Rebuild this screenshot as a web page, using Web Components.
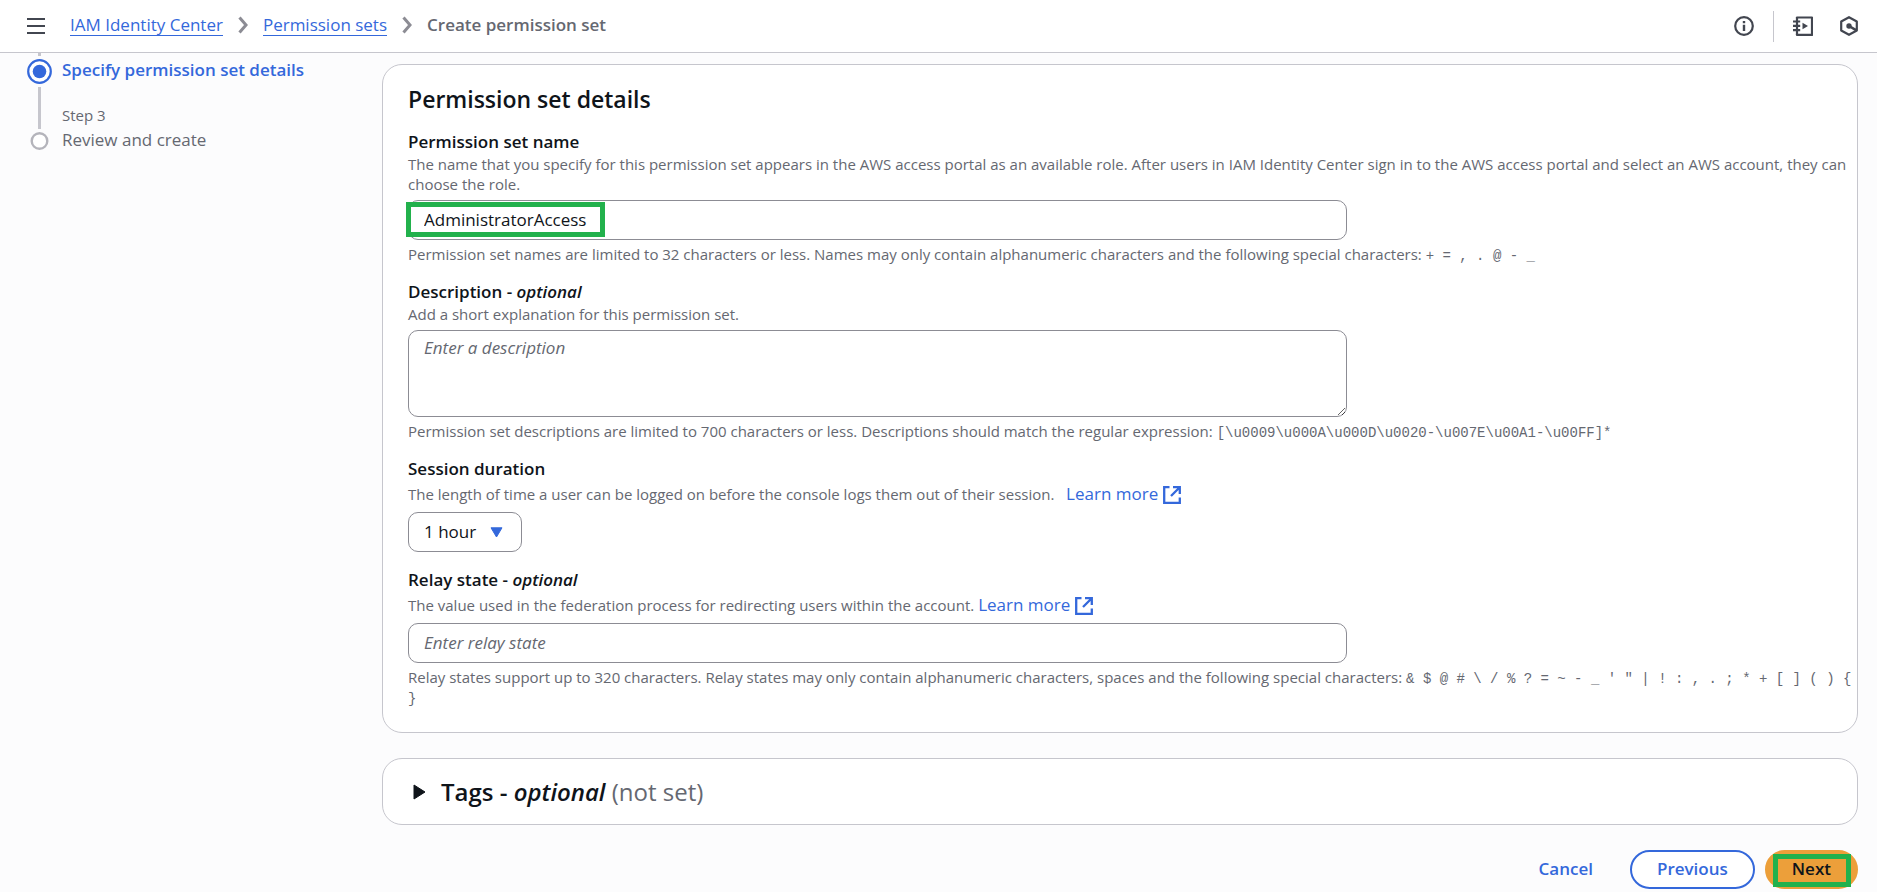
<!DOCTYPE html>
<html lang="en">
<head>
<meta charset="utf-8">
<meta name="viewport" content="width=device-width, initial-scale=1">
<title>Create permission set</title>
<style>
  body {
    margin: 0;
    background: #fcfcfd;
    color: #0f141a;
    font: 17px/25px "Open Sans", "Noto Sans", sans-serif;
    --blue: #3468db;
    --muted: #656871;
    --line: #c6c6cd;
    --field: #8c8c94;
    --mark: #22b14c;
  }
</style>
</head>
<body>
<iam-page></iam-page>

<script>
const define = (name, html, setup) => {
  const template = document.createElement('template');
  template.innerHTML = '<style>*{box-sizing:border-box}:host{display:block}</style>' + html;
  customElements.define(name, class extends HTMLElement {
    constructor() {
      super();
      this.attachShadow({ mode: 'open' }).append(template.content.cloneNode(true));
    }
    connectedCallback() { if (setup) setup(this, this.shadowRoot); }
  });
};

define('iam-header', `
  <style>
    :host { position: sticky; top: 0; z-index: 2; background: #fff; border-bottom: 1px solid var(--line); }
    header { display: flex; align-items: center; height: 52px; padding: 0 19px 0 27px; }
    button { display: flex; padding: 0; border: 0; background: none; color: #424650; cursor: pointer; }
    svg { display: block; }
    nav { flex: 1; margin-left: 25px; padding-bottom: 2px; }
    ol { display: flex; align-items: center; gap: 15px; margin: 0; padding: 0; list-style: none; }
    li { display: flex; align-items: center; gap: 15px; line-height: 21px; }
    a { display: block; color: var(--blue); text-decoration: none; border-bottom: 1px solid var(--blue); }
    .current { font-weight: 600; color: var(--muted); padding-bottom: 1px; }
    .tools { display: flex; align-items: center; }
    .rule { width: 1px; height: 31px; margin: 0 19px; background: var(--line); }
    .last { margin-left: 27px; }
  </style>
  <header>
    <button aria-label="Open navigation"><svg width="18" height="18" viewBox="0 0 18 18" stroke="currentColor" stroke-width="2"><path d="M0 2h18M0 9h18M0 16h18"/></svg></button>
    <nav aria-label="Breadcrumbs"><ol>
      <li><a href="#center">IAM Identity Center</a><svg width="10" height="18" viewBox="0 0 10 18" fill="none" stroke="#8c8c94" stroke-width="3"><path d="M1.500 1.500 8 9l-6.500 7.500"/></svg></li>
      <li><a href="#sets">Permission sets</a><svg width="10" height="18" viewBox="0 0 10 18" fill="none" stroke="#8c8c94" stroke-width="3"><path d="M1.500 1.500 8 9l-6.500 7.500"/></svg></li>
      <li class="current" aria-current="page">Create permission set</li>
    </ol></nav>
    <div class="tools">
      <button aria-label="Info"><svg width="20" height="20" viewBox="0 0 20 20" fill="none" stroke="currentColor" stroke-width="2.200"><circle cx="10" cy="10" r="8.800"/><path d="M10 5v2.200M10 8.700v6.300" stroke-width="2.400"/></svg></button>
      <span class="rule"></span>
      <button aria-label="Tutorials"><svg width="20" height="20" viewBox="0 0 20 20" fill="none" stroke="currentColor" stroke-width="2.200"><path d="M4 2.200V1.500h15v17.400H4v-1" stroke-linejoin="round"/><path d="M4 1v18M0 5.500h7.200M0 9.800h7.200M0 14.200h7.200"/><path d="M9.500 6.800v6.400l5.500-3.200z" fill="currentColor" stroke="none"/></svg></button>
      <button class="last" aria-label="Diagnostics"><svg width="18" height="20" viewBox="0 0 18 20" fill="none" stroke="currentColor" stroke-width="2.200"><path d="M9 1.200 1.200 5.500v9L9 18.800l7.800-4.300v-9z" stroke-linejoin="round"/><circle cx="9" cy="10" r="2.700" fill="currentColor" stroke="none"/><path d="m9 10 7.500 4.400" stroke-width="2.600"/></svg></button>
    </div>
  </header>`);

define('iam-steps', `
  <style>
    ol { margin: 0; padding: 0 0 0 27px; list-style: none; }
    li { display: grid; grid-template-columns: 25px 1fr; column-gap: 10px; }
    .rail { display: flex; flex-direction: column; align-items: center; gap: 3px; }
    .rail i { width: 3px; background: var(--line); }
    .rail .stub { height: 3px; }
    .rail .grow { flex: 1; }
    .rail.end { padding-bottom: 2px; }
    .active { padding-top: 4px; height: 52px; font-weight: 600; }
    a { color: var(--blue); text-decoration: none; }
    .next { color: var(--muted); }
    .next small { display: block; font-size: 15px; line-height: 20px; margin-bottom: 2px; }
    svg { display: block; }
  </style>
  <nav aria-label="Steps"><ol>
    <li>
      <div class="rail"><i class="stub"></i>
        <svg width="25" height="25" viewBox="0 0 25 25"><circle cx="12.500" cy="12.500" r="11.300" fill="#fff" stroke="#3468db" stroke-width="2.200"/><circle cx="12.500" cy="12.500" r="6.800" fill="#3468db"/></svg>
        <i class="grow"></i></div>
      <div class="active"><a href="#details" aria-current="step">Specify permission set details</a></div>
    </li>
    <li>
      <div class="rail end"><i class="grow"></i>
        <svg width="19" height="18" viewBox="0 0 19 18"><circle cx="9.500" cy="9" r="7.800" fill="#fff" stroke="#b4b4bb" stroke-width="2.400"/></svg></div>
      <div class="next"><small>Step 3</small>Review and create</div>
    </li>
  </ol></nav>`);

define('iam-card', `
  <style>
    :host { background: #fff; border: 1px solid var(--line); border-radius: 20px; box-sizing: border-box; }
  </style>
  <slot></slot>`);

define('iam-link', `
  <style>
    :host { display: inline; }
    a { font-size: 17px; line-height: 25px; color: var(--blue); text-decoration: none; white-space: nowrap; }
    svg { margin-left: 5px; vertical-align: -4px; }
  </style>
  <a href="#learn"><slot></slot><svg width="18" height="18" viewBox="0 0 18 18" fill="none" stroke="currentColor" stroke-width="2.300" aria-hidden="true"><path d="M6.500 1.200H1.200v15.600h15.600v-5.300"/><path d="M10 1.200h6.800V8M16.500 1.500 8 10"/></svg></a>`);

define('iam-field', `
  <style>
    :host { margin-top: 15px; }
    label { display: block; font-weight: 600; }
    .hint, .limit { font-size: 15px; line-height: 20px; color: var(--muted); }
    .control { position: relative; width: 65%; margin-top: 6px; }
    .limit { margin-top: 4px; }
    input, textarea, select { display: block; width: 100%; margin: 0; padding: 0 15px 2px; border: 1px solid var(--field); border-radius: 10px; background: #fff; color: #0f141a; font: inherit; outline: 0; }
    input, select { height: 40px; }
    textarea { height: 87px; padding-top: 4px; }
    ::placeholder { color: var(--muted); font-style: italic; opacity: 1; }
    select { appearance: none; grid-area: 1 / 1; }
    .pick { display: grid; align-items: center; width: 114px; }
    .pick svg { grid-area: 1 / 1; justify-self: end; margin-right: 19px; pointer-events: none; }
    .mark { position: absolute; left: -2px; top: 2px; width: 199px; height: 35px; border: 5px solid var(--mark); pointer-events: none; }
  </style>
  <label for="control"><slot name="label"></slot></label>
  <div class="hint"><slot name="hint"></slot></div>
  <div class="control"></div>
  <div class="limit"><slot name="limit"></slot></div>`,
  (host, root) => {
    const box = root.querySelector('.control');
    const kind = host.getAttribute('kind');
    if (box.firstChild) return;
    if (kind === 'select') {
      box.innerHTML = '<span class="pick"><select id="control"><option>1 hour</option><option>2 hours</option><option>4 hours</option><option>8 hours</option><option>12 hours</option></select><svg width="13" height="11" viewBox="0 0 13 11"><path d="M1 .800h11L6.500 10z" fill="#3468db" stroke="#3468db" stroke-linejoin="round"/></svg></span>';
    } else {
      const control = document.createElement(kind);
      control.id = 'control';
      if (host.hasAttribute('placeholder')) control.placeholder = host.getAttribute('placeholder');
      if (host.hasAttribute('value')) control.value = host.getAttribute('value');
      box.append(control);
    }
    if (host.hasAttribute('marked')) box.insertAdjacentHTML('beforeend', '<span class="mark"></span>');
    if (!host.querySelector('[slot=limit]')) root.querySelector('.limit').remove();
  });

define('iam-button', `
  <style>
    :host { position: relative; }
    button { height: 39px; padding: 0 25px 2px; border: 2px solid transparent; border-radius: 20px; background: none; color: var(--blue); font: inherit; font-weight: 600; cursor: pointer; }
    :host([variant=normal]) button { border-color: var(--blue); background: #fff; }
    :host([variant=primary]) button { background: #ec9f3a; border-color: #ec9f3a; color: #0f141a; }
    .mark { display: none; position: absolute; inset: 4px 7px 2px 8px; border: 5px solid var(--mark); pointer-events: none; }
    :host([marked]) .mark { display: block; }
  </style>
  <button type="button"><slot></slot></button><span class="mark"></span>`);

define('iam-tags', `
  <style>
    button { display: flex; align-items: center; gap: 15px; width: 100%; height: 65px; padding: 0 30px; border: 0; border-radius: 20px; background: none; color: inherit; font: inherit; line-height: 30px; text-align: left; cursor: pointer; }
    h2 { margin: 0; font-size: 24px; font-weight: 600; }
    h2 span { font-weight: 400; color: var(--muted); }
  </style>
  <button type="button" aria-expanded="false">
    <svg width="13" height="16" viewBox="0 0 13 16" aria-hidden="true"><path d="M1 1v14l11-7z" fill="#0f141a" stroke="#0f141a" stroke-linejoin="round"/></svg>
    <h2>Tags - <em>optional</em> <span>(not set)</span></h2>
  </button>`);

define('iam-page', `
  <style>
    .body { display: grid; grid-template-columns: 382px minmax(0, 1fr); padding-right: 19px; }
    main { display: flex; flex-direction: column; gap: 25px; padding: 11px 0 2px; }
    .details { padding: 19px 4px 25px 25px; }
    h2 { margin: 0; font-size: 23px; line-height: 30px; font-weight: 600; }
    code { font: 14px/14px "Liberation Mono", monospace; }
    footer { display: flex; justify-content: flex-end; gap: 10px; }
  </style>
  <iam-header></iam-header>
  <div class="body">
    <iam-steps></iam-steps>
    <main>
      <iam-card class="details">
        <h2>Permission set details</h2>
        <iam-field kind="input" value="AdministratorAccess" marked>
          <span slot="label">Permission set name</span>
          <span slot="hint">The name that you specify for this permission set appears in the AWS access portal as an available role. After users in IAM Identity Center sign in to the AWS access portal and select an AWS account, they can choose the role.</span>
          <span slot="limit">Permission set names are limited to 32 characters or less. Names may only contain alphanumeric characters and the following special characters: <code>+ = , . @ - _</code></span>
        </iam-field>
        <iam-field kind="textarea" placeholder="Enter a description">
          <span slot="label">Description - <em>optional</em></span>
          <span slot="hint">Add a short explanation for this permission set.</span>
          <span slot="limit">Permission set descriptions are limited to 700 characters or less. Descriptions should match the regular expression: <code>[\\u0009\\u000A\\u000D\\u0020-\\u007E\\u00A1-\\u00FF]*</code></span>
        </iam-field>
        <iam-field kind="select">
          <span slot="label">Session duration</span>
          <span slot="hint">The length of time a user can be logged on before the console logs them out of their session. &nbsp;<iam-link>Learn more</iam-link></span>
        </iam-field>
        <iam-field kind="input" placeholder="Enter relay state">
          <span slot="label">Relay state - <em>optional</em></span>
          <span slot="hint">The value used in the federation process for redirecting users within the account. <iam-link>Learn more</iam-link></span>
          <span slot="limit">Relay states support up to 320 characters. Relay states may only contain alphanumeric characters, spaces and the following special characters: <code>&amp; $ @ # \\ / % ? = ~ - _ ' " | ! : , . ; * + [ ] ( ) {</code> <code>}</code></span>
        </iam-field>
      </iam-card>
      <iam-card><iam-tags></iam-tags></iam-card>
      <footer>
        <iam-button>Cancel</iam-button>
        <iam-button variant="normal">Previous</iam-button>
        <iam-button variant="primary" marked>Next</iam-button>
      </footer>
    </main>
  </div>`);
</script>
</body>
</html>
